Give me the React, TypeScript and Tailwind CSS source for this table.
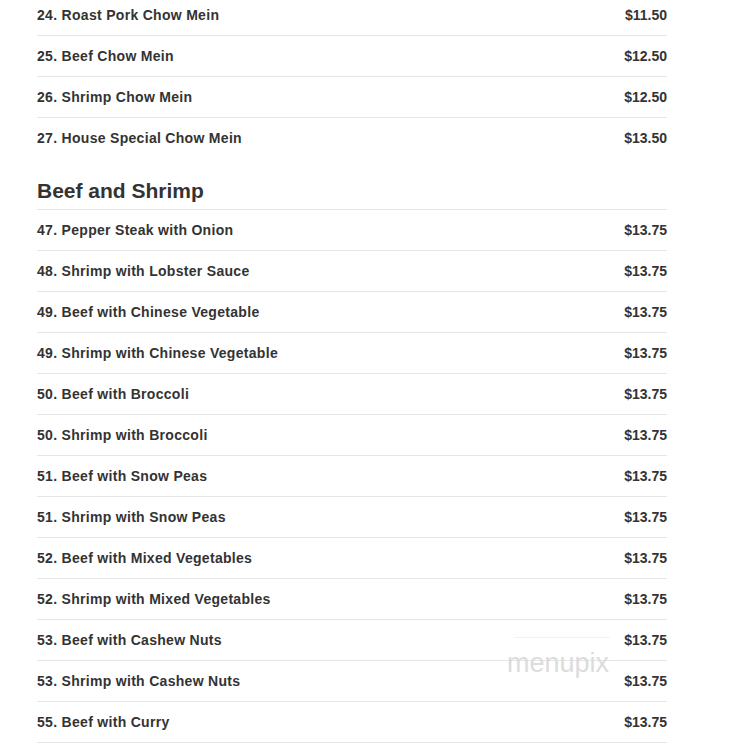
const chowMein = [
  { name: "24. Roast Pork Chow Mein", price: "$11.50" },
  { name: "25. Beef Chow Mein", price: "$12.50" },
  { name: "26. Shrimp Chow Mein", price: "$12.50" },
  { name: "27. House Special Chow Mein", price: "$13.50" },
];

const beefShrimp = [
  { name: "47. Pepper Steak with Onion", price: "$13.75" },
  { name: "48. Shrimp with Lobster Sauce", price: "$13.75" },
  { name: "49. Beef with Chinese Vegetable", price: "$13.75" },
  { name: "49. Shrimp with Chinese Vegetable", price: "$13.75" },
  { name: "50. Beef with Broccoli", price: "$13.75" },
  { name: "50. Shrimp with Broccoli", price: "$13.75" },
  { name: "51. Beef with Snow Peas", price: "$13.75" },
  { name: "51. Shrimp with Snow Peas", price: "$13.75" },
  { name: "52. Beef with Mixed Vegetables", price: "$13.75" },
  { name: "52. Shrimp with Mixed Vegetables", price: "$13.75" },
  { name: "53. Beef with Cashew Nuts", price: "$13.75" },
  { name: "53. Shrimp with Cashew Nuts", price: "$13.75" },
  { name: "55. Beef with Curry", price: "$13.75" },
];

interface IMenuRowProps {
  name: string;
  price: string;
  last?: boolean;
}

const MenuRow: React.FC<IMenuRowProps> = ({ name, price, last }) => {
  return (
    <div
      className={`flex h-[41px] items-center justify-between ${
        last ? "" : "border-b border-[#e6e6e6]"
      }`}
    >
      <span className="text-[14px] font-bold tracking-[0.3px] text-[#333]">
        {name}
      </span>
      <span className="text-[14px] font-bold text-[#333]">{price}</span>
    </div>
  );
};

export default function App() {
  return (
    <div
      className="relative h-[747px] overflow-hidden bg-white"
      style={{ fontFamily: '"Liberation Sans", Arial, sans-serif' }}
    >
      <div className="-mt-[5px] ml-[37px] w-[630px]">
        {chowMein.map((item, i) => (
          <MenuRow
            key={item.name}
            name={item.name}
            price={item.price}
            last={i === chowMein.length - 1}
          />
        ))}
        <div className="border-b border-[#e6e6e6] pt-[19px] pb-[6px]">
          <h2 className="text-[21px] leading-[25px] font-bold text-[#333]">
            Beef and Shrimp
          </h2>
        </div>
        {beefShrimp.map((item, i) => (
          <MenuRow key={i} name={item.name} price={item.price} />
        ))}
      </div>

      {/* watermark */}
      <div className="pointer-events-none absolute top-[637px] left-[514px] w-[96px] border-t border-[#f2f2f2]" />
      <div className="pointer-events-none absolute top-[647px] left-[507px] text-[27px] leading-[32px] font-light text-[#dcdcdc]">
        menupix
      </div>
    </div>
  );
}
